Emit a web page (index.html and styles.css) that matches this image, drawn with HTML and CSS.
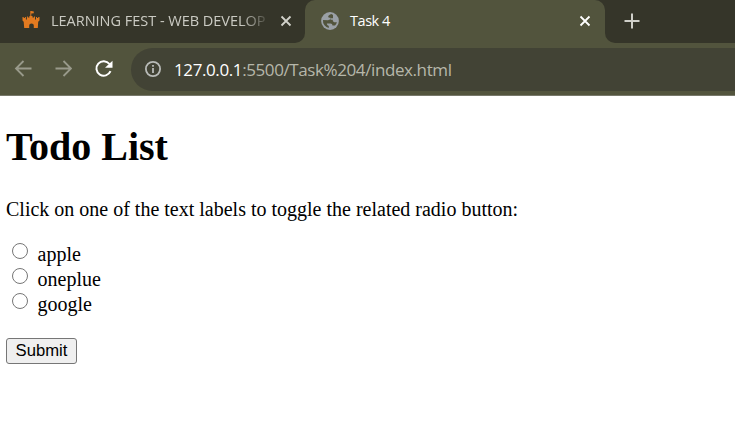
FILE: index.html
```html
<!DOCTYPE html>
<html lang="en">
<head>
<meta charset="utf-8">
<title>Task 4</title>
<link rel="stylesheet" href="styles.css">
</head>
<body>
<header class="browser">
  <div class="tabs">
    <div class="tab">
      <svg class="castle" width="18" height="18" viewBox="0 0 18 18" fill="#e27a20"><path d="M8.300 0h1l2.500.5v1.800l-2.500.3v2.400h1.200v1.500h1.500v-1h1v3h1V6h1v1h1.200V6h1.300v3.500l-1.300 1.200L15.800 17h-4v-2.500q0-2-2.300-2t-2.300 2V17H2.200L1.700 10.700.5 9.500V6h1.200v1h1.200V6h1v2.500h1v-3h1v1h1.500V5h.9z"/></svg>
      <span class="tab-title faded">LEARNING FEST - WEB DEVELOP</span>
      <svg class="close" width="12" height="12" viewBox="0 0 12 12" stroke="#d2d2ca" stroke-width="1.800"><path d="M1.500 1.500l9 9M10.500 1.500l-9 9"/></svg>
    </div>
    <div class="tab active">
      <svg width="18" height="18" viewBox="0 0 18 18"><circle cx="9" cy="9" r="8.900" fill="#9aa0a6"/><path d="M10.500 1.900C8.500 2.500 7 3.500 7.200 5q.2 1 2.300.8Q9.600 8 7 8.200L2 8q-.4 3 1.500 5.200 1.700 2.200 4.300 2.700v-2q-2-.3-2-2.300h3.700q2 .2 2 2h2.500q1.500-1.500 1.900-3.400h-2.700q-1.800-.4-1.500-2.400h-2.200V6.200h2.500V3z" fill="#52543d"/></svg>
      <span class="tab-title">Task 4</span>
      <svg class="close" width="12" height="12" viewBox="0 0 12 12" stroke="#fff" stroke-width="1.800"><path d="M1.500 1.500l9 9M10.500 1.500l-9 9"/></svg>
    </div>
    <div class="new-tab"><svg width="16" height="16" viewBox="0 0 16 16" stroke="#d0d0c9" stroke-width="2"><path d="M0.500 8h15M8 .5v15"/></svg></div>
  </div>
  <div class="toolbar">
    <svg class="nav" width="18" height="18" viewBox="0 0 18 18" fill="none" stroke="#999a8b" stroke-width="1.800"><path d="M17.500 8.500H2.500M9.500 1L2 8.500 9.500 16"/></svg>
    <svg class="nav" width="18" height="18" viewBox="0 0 18 18" fill="none" stroke="#999a8b" stroke-width="1.800"><path d="M1.500 8.500h15M9.500 1L17 8.500 9.500 16"/></svg>
    <svg class="nav" width="19" height="18" viewBox="0 0 19 18"><path d="M15.500 4A7.300 7.300 0 1 0 16.500 11.200" fill="none" stroke="#fff" stroke-width="2"/><path d="M18.500.8v7H11z" fill="#fff"/></svg>
    <div class="address">
      <svg width="16" height="16" viewBox="0 0 16 16" fill="none" stroke="#b9bbb8"><circle cx="8" cy="8" r="7.100" stroke-width="1.800"/><path d="M8 7v5M8 4v1.700" stroke-width="1.800"/></svg>
      <span class="url"><span class="host">127.0.0.1</span><span class="path">:5500/Task%204/index.html</span></span>
    </div>
  </div>
</header>
<main>
  <h1>Todo List</h1>
  <p>Click on one of the text labels to toggle the related radio button:</p>
  <form>
    <div class="option"><input type="radio" id="apple" name="item"><label for="apple">apple</label></div>
    <div class="option"><input type="radio" id="oneplue" name="item"><label for="oneplue">oneplue</label></div>
    <div class="option"><input type="radio" id="google" name="item"><label for="google">google</label></div>
    <button type="button">Submit</button>
  </form>
</main>
</body>
</html>
```
FILE: styles.css
```css
* { box-sizing: border-box; }
body { margin: 0; background: #fff; color: #000; font: 20px/25px "Liberation Serif", serif; }
svg { display: block; flex: none; }

.browser { height: 96px; background: #52543d; border-bottom: 1px solid #77786a; font-family: "Open Sans", "Noto Sans", sans-serif; }
.tabs { display: flex; height: 43px; background: linear-gradient(#353529, #353529) 295px 0 / 440px 20px no-repeat, #52543d; }
.tab { display: flex; flex: none; align-items: center; width: 305px; height: 43px; padding: 0 13px 2px 22px; background: #353529; border-bottom-right-radius: 10px; color: #cbcbc3; }
.castle { margin-top: -2px; }
.tab.active { width: 300px; padding: 0 14px 1px 16px; background: #52543d; color: #fff; border-radius: 10px 10px 0 0; }
.tab-title { margin-left: 11px; font-size: 14.5px; line-height: 20px; letter-spacing: -0.45px; white-space: nowrap; }
.faded { width: 216px; letter-spacing: -0.02px; -webkit-mask-image: linear-gradient(90deg, #000 88%, transparent 102%); mask-image: linear-gradient(90deg, #000 88%, transparent 102%); }
.close { margin-left: auto; }
.new-tab { flex: 1; padding: 13px 0 0 19px; background: #353529; border-bottom-left-radius: 10px; }

.toolbar { display: flex; align-items: center; height: 52px; padding-left: 14px; }
.nav { flex: none; margin-right: 22px; }
.address { display: flex; align-items: center; flex: 1; height: 43px; margin-left: -4px; padding-left: 14px; background: #424335; border-radius: 22px 0 0 22px; }
.url { margin-left: 13px; font-size: 17px; letter-spacing: -0.4px; white-space: nowrap; }
.host { color: #fff; }
.path { color: #b6b7aa; }

main { padding: 28px 6px 0; }
h1 { margin: 0; font-size: 40px; line-height: 46px; }
p { margin: 27px 0 19px; }
.option { display: flex; height: 25px; }
input { width: 16px; height: 16px; margin: 2px 9.5px 0 6px; }
label { padding-top: 1px; }
button { display: block; width: 71px; height: 26px; margin-top: 22px; padding: 0; border: 1px solid #767676; border-radius: 3px; background: #efefef; color: #000; font: 16.67px/22px "Liberation Sans", sans-serif; }
```
